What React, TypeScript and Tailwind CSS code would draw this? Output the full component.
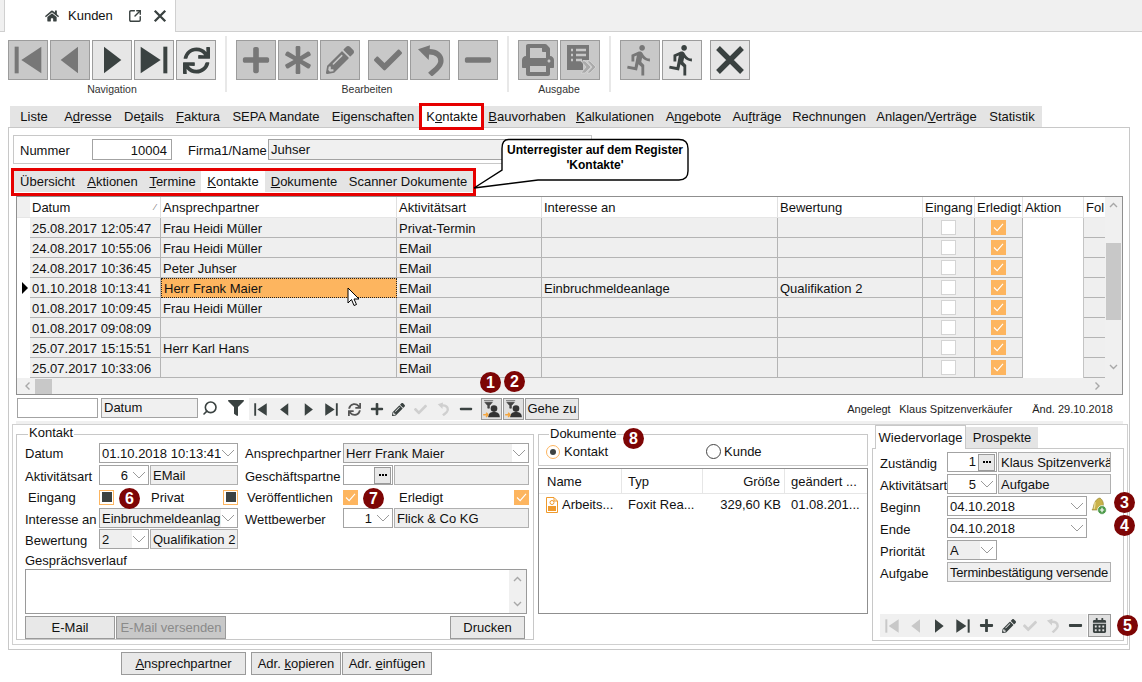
import type { ReactNode } from "react";
import { FaAsterisk, FaCalendarAlt, FaCheck, FaFilter, FaHome, FaMinus, FaPencilAlt, FaPlus, FaPrint, FaSync } from "react-icons/fa";
import { MdDirectionsRun } from "react-icons/md";
import { Search, SquareArrowOutUpRight } from "lucide-react";

const columns = "grid grid-cols-[13px_131px_236px_145px_236px_145px_52px_48px_61px_21px]";
const cell = "bg-[#efefef] border-r border-b border-[#b4b4b4] pl-[2px] pt-[3px] leading-[15px] whitespace-nowrap";

const rows = [
  ["25.08.2017 12:05:47", "Frau Heidi Müller", "Privat-Termin", "", ""],
  ["24.08.2017 10:55:06", "Frau Heidi Müller", "EMail", "", ""],
  ["24.08.2017 10:36:45", "Peter Juhser", "EMail", "", ""],
  ["01.10.2018 10:13:41", "Herr Frank Maier", "EMail", "Einbruchmeldeanlage", "Qualifikation 2"],
  ["01.08.2017 10:09:45", "Frau Heidi Müller", "EMail", "", ""],
  ["01.08.2017 09:08:09", "", "EMail", "", ""],
  ["25.07.2017 15:15:51", "Herr Karl Hans", "EMail", "", ""],
  ["25.07.2017 10:33:06", "", "EMail", "", ""],
];

function First({ className = "" }: { className?: string }) {
  return (
    <svg viewBox="0 0 24 24" className={className} fill="currentColor">
      <rect x="2" y="2" width="3" height="20" />
      <polygon points="22,2 22,22 7,12" />
    </svg>
  );
}

function Prev({ className = "" }: { className?: string }) {
  return (
    <svg viewBox="0 0 24 24" className={className} fill="currentColor">
      <polygon points="18,2 18,22 5,12" />
    </svg>
  );
}

function Next({ className = "" }: { className?: string }) {
  return (
    <svg viewBox="0 0 24 24" className={className} fill="currentColor">
      <polygon points="6,2 6,22 19,12" />
    </svg>
  );
}

function Last({ className = "" }: { className?: string }) {
  return (
    <svg viewBox="0 0 24 24" className={className} fill="currentColor">
      <polygon points="2,2 2,22 17,12" />
      <rect x="19" y="2" width="3" height="20" />
    </svg>
  );
}

function Undo({ className = "" }: { className?: string }) {
  return (
    <svg viewBox="0 0 24 24" className={className} fill="none" stroke="currentColor" strokeWidth="4">
      <polygon points="3,4 12,1 11,12" fill="currentColor" stroke="none" />
      <path d="M9 6 C17 5 21 9 20 14 C19 18 15 20 12 23" />
    </svg>
  );
}

function Close({ className = "" }: { className?: string }) {
  return (
    <svg viewBox="0 0 24 24" className={className} fill="none" stroke="currentColor" strokeWidth="4">
      <path d="M3 3 L21 21 M21 3 L3 21" />
    </svg>
  );
}

function ListArrow({ className = "" }: { className?: string }) {
  return (
    <svg viewBox="0 0 32 32" className={className}>
      <path d="M3 1 H25 V16 H19 V26 H3 Z" fill="#777" />
      <path d="M7 6 H9 M12 6 H22 M7 11 H9 M12 11 H22 M7 16 H9 M12 16 H18" stroke="#c8c8c8" strokeWidth="2.4" />
      <path d="M17 17 H21 L27 23 L21 29 H17 L22 23 Z M23 17 H26 L32 23 L26 29 H23 L28 23 Z" fill="#aaa" stroke="#ddd" strokeWidth="0.6" />
    </svg>
  );
}

function ContactFilter({ className = "" }: { className?: string }) {
  return (
    <svg viewBox="0 0 22 24" className={className}>
      <path d="M2 2 H13 M3 4 H12 L8.5 8 V11 H6.5 V8 Z" fill="#444" stroke="#444" strokeWidth="0.8" />
      <circle cx="14" cy="11.5" r="4" fill="#333" />
      <path d="M7 22 C7 17 10 15.5 14 15.5 C18 15.5 21 17 21 22 Z" fill="#333" />
      <path d="M1 19 H7 M7 19 L4.5 16.5 M7 19 L4.5 21.5" stroke="#f4a640" strokeWidth="1.8" fill="none" />
    </svg>
  );
}

function Chevron() {
  return (
    <svg viewBox="0 0 14 8" className="w-[14px] h-2 shrink-0" fill="none" stroke="#9a9a9a">
      <path d="M1 1 L7 7 L13 1" />
    </svg>
  );
}

function Arrow({ className = "" }: { className?: string }) {
  return (
    <svg viewBox="0 0 9 6" className={`w-[9px] h-[6px] ${className}`} fill="none" stroke="#a8a8a8" strokeWidth="1.4">
      <path d="M1 1 L4.5 4.5 L8 1" />
    </svg>
  );
}

function Tick() {
  return (
    <span className="w-[15px] h-[15px] bg-[#fdb55f] flex items-center justify-center shrink-0">
      <svg viewBox="0 0 12 10" className="w-[11px] h-[9px]" fill="none" stroke="white" strokeWidth="1.2">
        <path d="M1 5 L4.5 8.5 L11 1" />
      </svg>
    </span>
  );
}

function Square() {
  return (
    <span className="w-[15px] h-[15px] border border-[#fdb55f] flex items-center justify-center shrink-0">
      <span className="w-[10px] h-[10px] bg-[#3c4242]" />
    </span>
  );
}

function ToolBtn({ on, children }: { on?: boolean; children: ReactNode }) {
  return (
    <div
      className={
        on
          ? "w-10 h-10 border border-[#9c9c9c] bg-[#e6e6e6] text-[#3a4241] flex items-center justify-center"
          : "w-10 h-10 border border-[#9c9c9c] bg-[#c8c8c8] text-[#777777] flex items-center justify-center"
      }
    >
      {children}
    </div>
  );
}

function Divider() {
  return <div className="w-[2px] h-14 -mt-1 mx-[9px] bg-[#e8e8e8] shrink-0" />;
}

function ToolLabel({ children }: { children: ReactNode }) {
  return <div className="text-[10.5px] leading-[12px] mt-[3px] text-center text-[#333]">{children}</div>;
}

function Tab({ w, children, on }: { w: string; children: ReactNode; on?: boolean }) {
  return (
    <div className={`${w} h-full shrink-0 flex items-center justify-center whitespace-nowrap ${on ? "bg-white" : ""}`}>
      <span>{children}</span>
    </div>
  );
}

function Label({ w, children, low }: { w: string; children: ReactNode; low?: boolean }) {
  return <span className={`${w} ${low ? "pt-[4px]" : "pt-[2px]"} shrink-0 whitespace-nowrap`}>{children}</span>;
}

function Combo({ w, text, right, shade }: { w: string; text: string; right?: boolean; shade?: boolean }) {
  return (
    <div className={`${w} h-[20px] border border-[#a3a3a3] bg-white flex items-center shrink-0 overflow-hidden`}>
      <span
        className={
          (right ? "flex-1 text-right pr-1 " : "flex-1 pl-[2px] ") +
          (shade ? "bg-[#efefef] h-full " : "") +
          "leading-[19px] overflow-hidden whitespace-nowrap"
        }
      >
        {text}
      </span>
      <span className="w-[16px] flex justify-start shrink-0">
        <Chevron />
      </span>
    </div>
  );
}

function ReadOnly({ w, text }: { w: string; text: string }) {
  return (
    <div className={`${w} h-[20px] border border-[#b0b0b0] bg-[#efefef] pl-[2px] leading-[19px] shrink-0 overflow-hidden whitespace-nowrap`}>
      {text}
    </div>
  );
}

function Dots() {
  return (
    <span className="w-[17px] h-[17px] border border-[#9a9a9a] bg-[#e8e8e8] flex items-center justify-center gap-[1px] shrink-0">
      <span className="w-[2px] h-[2px] bg-black" />
      <span className="w-[2px] h-[2px] bg-black" />
      <span className="w-[2px] h-[2px] bg-black" />
    </span>
  );
}

function Button({ className, children }: { className: string; children: ReactNode }) {
  return (
    <div className={`${className} h-[23px] border border-[#9a9a9a] flex items-center justify-center whitespace-nowrap shrink-0`}>
      {children}
    </div>
  );
}

function Badge({ n, className }: { n: number; className: string }) {
  return (
    <div className={`absolute ${className} w-[21px] h-[21px] rounded-full bg-[#7d0505] text-white text-[16px] font-bold flex items-center justify-center`}>
      {n}
    </div>
  );
}

function Pdf() {
  return (
    <svg viewBox="0 0 12 16" className="w-3 h-4 shrink-0">
      <path d="M0.5 0.5 H8 L11.5 4 V15.5 H0.5 Z" fill="white" stroke="#ef9a2d" />
      <path d="M8 1 V4 H11" fill="none" stroke="#ef9a2d" />
      <rect x="2" y="9" width="8" height="5" fill="#ef9a2d" />
      <circle cx="6" cy="5.5" r="2" fill="none" stroke="#ef9a2d" />
    </svg>
  );
}

function BellPlus() {
  return (
    <svg viewBox="0 0 18 18" className="ml-[2px] w-[18px] h-[18px] shrink-0">
      <path d="M11 1 C14 3 15 7 14 9 L15 13 L3 13 C5 11 4 8 6 5 C7 3 9 1 11 1 Z" fill="#c9b24a" stroke="#8f7d2a" strokeWidth="0.6" />
      <path d="M6 5 C6 8 6 10 5 12" stroke="#ece0a0" strokeWidth="1.2" fill="none" />
      <circle cx="13" cy="13" r="4.4" fill="#4d9a4a" stroke="white" strokeWidth="0.8" />
      <path d="M13 10.8 V15.2 M10.8 13 H15.2" stroke="white" strokeWidth="1.2" />
    </svg>
  );
}

export default function App() {
  return (
    <div className="relative w-[1142px] h-[682px] overflow-hidden bg-white text-[13px] leading-[16px] text-[#111] font-['Liberation_Sans',Arial,sans-serif]">
      {/* window tab strip */}
      <div className="h-8 bg-[#f0f0f0] border-b border-[#cfcfcf] pl-1">
        <div className="w-[172px] h-8 bg-white border-x border-[#d0d0d0] flex items-center pl-[40px]">
          <FaHome className="w-[14px] h-[14px] text-[#3a4241]" />
          <span className="ml-[9px] w-[52px]">Kunden</span>
          <SquareArrowOutUpRight className="ml-[8px] w-[14px] h-[14px] text-[#3a4241]" strokeWidth={2.4} />
          <Close className="ml-[11px] w-[14px] h-[14px] text-[#3a4241]" />
        </div>
      </div>

      {/* toolbar */}
      <div className="h-[74px] flex items-start pl-2 pt-2">
        <div className="shrink-0">
          <div className="flex gap-[2px]">
            <ToolBtn><First className="w-8 h-8" /></ToolBtn>
            <ToolBtn><Prev className="w-8 h-8" /></ToolBtn>
            <ToolBtn on><Next className="w-8 h-8" /></ToolBtn>
            <ToolBtn on><Last className="w-8 h-8" /></ToolBtn>
            <ToolBtn on><FaSync className="w-[27px] h-[27px]" /></ToolBtn>
          </div>
          <ToolLabel>Navigation</ToolLabel>
        </div>
        <Divider />
        <div className="shrink-0">
          <div className="flex">
            <div className="flex gap-[2px]">
              <ToolBtn><FaPlus className="w-[30px] h-[30px]" /></ToolBtn>
              <ToolBtn><FaAsterisk className="w-[28px] h-[28px]" /></ToolBtn>
              <ToolBtn><FaPencilAlt className="w-[28px] h-[28px]" /></ToolBtn>
            </div>
            <div className="flex gap-[2px] ml-2">
              <ToolBtn><FaCheck className="w-[28px] h-[28px]" /></ToolBtn>
              <ToolBtn><Undo className="w-8 h-8" /></ToolBtn>
            </div>
            <div className="ml-2">
              <ToolBtn><FaMinus className="w-[30px] h-[30px]" /></ToolBtn>
            </div>
          </div>
          <ToolLabel>Bearbeiten</ToolLabel>
        </div>
        <Divider />
        <div className="shrink-0">
          <div className="flex gap-[2px]">
            <ToolBtn><FaPrint className="w-[32px] h-[32px]" /></ToolBtn>
            <ToolBtn><ListArrow className="w-8 h-8" /></ToolBtn>
          </div>
          <ToolLabel>Ausgabe</ToolLabel>
        </div>
        <Divider />
        <div className="flex gap-[2px] shrink-0">
          <ToolBtn><MdDirectionsRun className="w-[34px] h-[34px]" /></ToolBtn>
          <ToolBtn on><MdDirectionsRun className="w-[34px] h-[34px]" /></ToolBtn>
        </div>
        <div className="ml-2">
          <ToolBtn on><Close className="w-8 h-8" /></ToolBtn>
        </div>
      </div>

      {/* main register tabs */}
      <div className="ml-[10px] w-[1032px] h-[21px] bg-[#e4e4e4] flex">
        <Tab w="w-[48px]">Liste</Tab>
        <Tab w="w-[60px]">A<u>d</u>resse</Tab>
        <Tab w="w-[52px]">De<u>t</u>ails</Tab>
        <Tab w="w-[56px]"><u>F</u>aktura</Tab>
        <Tab w="w-[100px]">SEPA Mandate</Tab>
        <Tab w="w-[94px]">Ei<u>g</u>enschaften</Tab>
        <Tab w="w-[64px]" on>K<u>o</u>ntakte</Tab>
        <Tab w="w-[86px]"><u>B</u>auvorhaben</Tab>
        <Tab w="w-[90px]"><u>K</u>alkulationen</Tab>
        <Tab w="w-[67px]">A<u>n</u>gebote</Tab>
        <Tab w="w-[60px]">Au<u>f</u>träge</Tab>
        <Tab w="w-[84px]">Rechnun<u>g</u>en</Tab>
        <Tab w="w-[111px]">Anlagen/<u>V</u>erträge</Tab>
        <Tab w="w-[60px]">Statistik</Tab>
      </div>

      {/* register frame */}
      <div className="ml-2 w-[1122px] h-[523px] border border-[#c8c8c8]">
        <div className="mt-[7px] ml-1 w-[579px] h-[29px] border border-[#c8c8c8] pl-[6px] flex items-center">
          <Label w="w-[72px]">Nummer</Label>
          <span className="w-20 h-[21px] border border-[#a3a3a3] text-right pr-1 leading-[21px]">10004</span>
          <Label w="ml-4 w-[80px]">Firma1/Name</Label>
          <span className="flex-1 h-[21px] border border-[#a3a3a3] bg-[#f0f0f0] pl-[2px] leading-[19px]">Juhser</span>
        </div>

        <div className="mt-[7px] ml-1 w-[460px] h-[21px] bg-[#e4e4e4] flex pl-[1px]">
          <Tab w="w-[67px]">Übersicht</Tab>
          <Tab w="w-[63px]"><u>A</u>ktionen</Tab>
          <Tab w="w-[57px]"><u>T</u>ermine</Tab>
          <Tab w="w-[64px]" on><u>K</u>ontakte</Tab>
          <Tab w="w-[78px]"><u>D</u>okumente</Tab>
          <Tab w="w-[130px]">Scanner Dokumente</Tab>
        </div>

        {/* grid */}
        <div className="mt-1 ml-[7px] w-[1107px] h-[199px] border border-[#8f8f8f] flex">
          <div className="w-[1088px] shrink-0">
            <div className={`${columns} h-[21px] border-b border-[#e6e6e6]`}>
              <div className="bg-[#f0f0f0]" />
              <div className="relative pl-[2px] pt-[3px] border-r border-[#e0e0e0]">
                Datum
                <span className="absolute right-[4px] top-[2px] text-[9px] text-[#777]">⁄</span>
              </div>
              <div className="pl-[2px] pt-[3px] border-r border-[#e0e0e0]">Ansprechpartner</div>
              <div className="pl-[2px] pt-[3px] border-r border-[#e0e0e0]">Aktivitätsart</div>
              <div className="pl-[2px] pt-[3px] border-r border-[#e0e0e0]">Interesse an</div>
              <div className="pl-[2px] pt-[3px] border-r border-[#e0e0e0]">Bewertung</div>
              <div className="pl-[2px] pt-[3px] border-r border-[#e0e0e0] whitespace-nowrap">Eingang</div>
              <div className="pl-[2px] pt-[3px] border-r border-[#e0e0e0] whitespace-nowrap">Erledigt</div>
              <div className="pl-[2px] pt-[3px] border-r border-[#e0e0e0]">Aktion</div>
              <div className="pl-[2px] pt-[3px] whitespace-nowrap">Fol</div>
            </div>
            {rows.map((r, i) => (
              <div key={r[0]} className={`${columns} h-5`}>
                <div className="bg-white flex items-center justify-end">
                  {i === 3 && (
                    <svg viewBox="0 0 6 12" className="w-[6px] h-3 mr-[2px]">
                      <polygon points="0,0 6,6 0,12" fill="#000" />
                    </svg>
                  )}
                </div>
                <div className={cell}>{r[0]}</div>
                {i === 3 ? (
                  <div className="bg-[#fdb55f] border border-dotted border-[#222] pl-[2px] pt-[2px] leading-[15px]">{r[1]}</div>
                ) : (
                  <div className={cell}>{r[1]}</div>
                )}
                <div className={cell}>{r[2]}</div>
                <div className={cell}>{r[3]}</div>
                <div className={cell}>{r[4]}</div>
                <div className="bg-[#efefef] border-r border-b border-[#b4b4b4] flex items-center justify-center">
                  <span className="w-[15px] h-[15px] bg-white border border-[#d4d4d4]" />
                </div>
                <div className="bg-[#efefef] border-r border-b border-[#b4b4b4] flex items-center justify-center">
                  <Tick />
                </div>
                <div className="bg-white border-r border-[#c4c4c4]" />
                <div className="bg-[#efefef] border-b border-[#b4b4b4]" />
              </div>
            ))}
            <div className="h-4 bg-[#f0f0f0] flex items-center">
              <Arrow className="ml-[6px] rotate-90" />
              <span className="ml-[3px] w-[17px] h-[15px] bg-[#c8c8c8]" />
              <Arrow className="ml-auto mr-[3px] -rotate-90" />
            </div>
          </div>
          <div className="flex-1 bg-[#f0f0f0] flex flex-col items-center">
            <Arrow className="mt-[5px] rotate-180" />
            <div className="mt-[35px] w-[15px] h-[77px] bg-[#c8c8c8]" />
            <Arrow className="mt-[44px]" />
          </div>
        </div>

        {/* navigator row */}
        <div className="mt-[3px] ml-2 h-[22px] flex items-start">
          <span className="w-[81px] h-5 border border-[#a3a3a3]" />
          <span className="ml-[3px] w-[97px] h-5 border border-[#a3a3a3] bg-[#f0f0f0] pl-[2px] leading-[18px]">Datum</span>
          <div className="w-[24px] h-5 flex items-center justify-center">
            <Search className="w-[16px] h-[16px] text-[#3a4241] -scale-x-100" strokeWidth={2.4} />
          </div>
          <div className="w-[27px] h-5 flex items-center justify-center">
            <FaFilter className="w-[16px] h-[16px] text-[#3a4241]" />
          </div>
          <div className="w-[232px] h-[22px] bg-[#f0f0f0] text-[#3a4241] flex items-center justify-around pr-1">
            <First className="w-[15px] h-[15px]" />
            <Prev className="w-[15px] h-[15px]" />
            <Next className="w-[15px] h-[15px]" />
            <Last className="w-[15px] h-[15px]" />
            <FaSync className="w-[13px] h-[13px] text-[#555]" />
            <FaPlus className="w-[14px] h-[14px]" />
            <FaPencilAlt className="w-[13px] h-[13px]" />
            <FaCheck className="w-[13px] h-[13px] text-[#cfcfcf]" />
            <Undo className="w-[14px] h-[14px] text-[#cfcfcf]" />
            <FaMinus className="w-[14px] h-[14px]" />
          </div>
          <div className="w-[21px] h-[22px] border border-[#9a9a9a] bg-[#e0e0e0] flex items-center justify-center">
            <ContactFilter className="w-[19px] h-[20px]" />
          </div>
          <div className="ml-[1px] w-[21px] h-[22px] border border-[#9a9a9a] bg-[#e0e0e0] flex items-center justify-center">
            <ContactFilter className="w-[19px] h-[20px]" />
          </div>
          <div className="ml-[1px] w-[54px] h-[22px] border border-[#9a9a9a] bg-[#e8e8e8] flex items-center justify-center">Gehe zu</div>
          <div className="ml-auto mr-4 h-[22px] flex items-center text-[11px] text-[#222]">
            <span className="w-[52px]">Angelegt</span>
            <span className="w-[133px]">Klaus Spitzenverkäufer</span>
            <span>Änd. 29.10.2018</span>
          </div>
        </div>
        <div className="mt-[1px] ml-[7px] w-[1107px] h-[3px] bg-[#f0f0f0]" />

        {/* lower section */}
        <div className="ml-[3px] w-[1116px] h-[221px] border border-[#d0d0d0] flex items-start">
          <fieldset className="mt-[2px] ml-[3px] w-[518px] h-[213px] border border-[#c8c8c8] pl-2 shrink-0">
            <legend className="ml-[3px] px-[1px] h-[15px] leading-[12px]">Kontakt</legend>
            <div className="mt-[1px] h-5 mb-[2px] flex items-center">
              <Label w="w-[74px]">Datum</Label>
              <Combo w="w-[139px]" text="01.10.2018 10:13:41" />
              <Label w="ml-[7px] w-[98px]">Ansprechpartner</Label>
              <Combo w="w-[186px]" text="Herr Frank Maier" shade />
            </div>
            <div className="h-5 mb-[2px] flex items-center">
              <Label w="w-[74px]" low>Aktivitätsart</Label>
              <Combo w="w-[50px]" text="6" right />
              <span className="ml-[1px]"><ReadOnly w="w-[88px]" text="EMail" /></span>
              <Label w="ml-[7px] w-[98px]" low>Geschäftspartne</Label>
              <div className="w-[50px] h-5 border border-[#a3a3a3] flex items-center justify-end pr-[1px] shrink-0">
                <Dots />
              </div>
              <span className="ml-[1px]"><ReadOnly w="w-[135px]" text="" /></span>
            </div>
            <div className="h-5 mb-[1px] flex items-center">
              <Label w="w-[74px] pl-[3px]">Eingang</Label>
              <Square />
              <Label w="ml-[37px] w-[72px]">Privat</Label>
              <Square />
              <Label w="ml-[9px] w-[96px]">Veröffentlichen</Label>
              <Tick />
              <Label w="ml-[41px] w-[115px]">Erledigt</Label>
              <Tick />
            </div>
            <div className="h-5 mb-[1px] flex items-center">
              <Label w="w-[74px]" low>Interesse an</Label>
              <Combo w="w-[139px]" text="Einbruchmeldeanlag" shade />
              <Label w="ml-[7px] w-[98px]" low>Wettbewerber</Label>
              <Combo w="w-[50px]" text="1" right />
              <span className="ml-[1px]"><ReadOnly w="w-[135px]" text="Flick & Co KG" /></span>
            </div>
            <div className="h-5 flex items-center">
              <Label w="w-[74px]" low>Bewertung</Label>
              <Combo w="w-[50px]" text="2" shade />
              <span className="ml-[1px]"><ReadOnly w="w-[88px]" text="Qualifikation 2" /></span>
            </div>
            <div className="mt-[4px] h-4 leading-[15px]">Gesprächsverlauf</div>
            <div className="w-[502px] h-[45px] border border-[#9a9a9a] flex justify-end">
              <div className="w-[17px] bg-[#f0f0f0] flex flex-col justify-between items-center py-[6px]">
                <Arrow className="rotate-180" />
                <Arrow />
              </div>
            </div>
            <div className="mt-[2px] w-[500px] flex">
              <Button className="w-[90px] bg-[#e8e8e8]">E-Mail</Button>
              <Button className="ml-[1px] w-[110px] bg-[#c8c8c8] text-[#8a8a8a]">E-Mail versenden</Button>
              <Button className="ml-auto w-[75px] bg-[#e8e8e8]">Drucken</Button>
            </div>
          </fieldset>

          <div className="mt-[2px] ml-1 w-[330px] shrink-0">
            <fieldset className="h-[39px] border border-[#c8c8c8]">
              <legend className="ml-[10px] px-[1px] h-[15px] leading-[13px]">Dokumente</legend>
              <div className="flex items-center h-[15px] mt-[2px] pl-[7px]">
                <span className="w-[14px] h-[14px] rounded-full border border-[#fdb55f] flex items-center justify-center">
                  <span className="w-[6px] h-[6px] rounded-full bg-[#3c4242]" />
                </span>
                <span className="ml-[4px] w-[142px]">Kontakt</span>
                <span className="w-[15px] h-[15px] rounded-full border border-[#444]" />
                <span className="ml-[3px]">Kunde</span>
              </div>
            </fieldset>
            <div className="mt-[2px] h-[146px] border border-[#8f8f8f]">
              <div className="flex h-[25px] items-center border-b border-[#e6e6e6]">
                <span className="w-[83px] h-full pl-2 leading-[26px] border-r border-[#e6e6e6]">Name</span>
                <span className="w-[81px] h-full pl-[6px] leading-[26px] border-r border-[#e6e6e6]">Typ</span>
                <span className="w-[82px] h-full pr-1 text-right leading-[26px] border-r border-[#e6e6e6]">Größe</span>
                <span className="pl-[6px] leading-[26px] h-full">geändert ...</span>
              </div>
              <div className="flex h-[22px] items-center">
                <span className="w-[83px] pl-[7px] flex items-center gap-[4px] whitespace-nowrap"><Pdf />Arbeits...</span>
                <span className="w-[81px] pl-[6px] whitespace-nowrap">Foxit Rea...</span>
                <span className="w-[82px] pr-1 text-right whitespace-nowrap">329,60 KB</span>
                <span className="pl-[6px] whitespace-nowrap">01.08.201...</span>
              </div>
            </div>
          </div>

          <div className="ml-1 w-[252px] shrink-0">
            <div className="flex items-end h-[23px] pl-[3px]">
              <div className="w-[91px] h-[24px] -mb-[1px] relative bg-white border-x border-t border-[#c8c8c8] flex items-center justify-center">Wiedervorlage</div>
              <div className="w-[72px] h-[21px] bg-[#e4e4e4] flex items-center justify-center">Prospekte</div>
            </div>
            <div className="h-[193px] border border-[#c8c8c8] pl-[7px] pt-[3px]">
              <div className="flex flex-col gap-[2px]">
                <div className="h-5 flex items-center">
                  <Label w="w-[67px]" low>Zuständig</Label>
                  <div className="w-[50px] h-5 border border-[#a3a3a3] flex items-center justify-end gap-[2px] pr-[1px] shrink-0">
                    <span>1</span>
                    <Dots />
                  </div>
                  <span className="ml-[1px]"><ReadOnly w="w-[113px]" text="Klaus Spitzenverkä" /></span>
                </div>
                <div className="h-5 flex items-center">
                  <Label w="w-[67px]" low>Aktivitätsart</Label>
                  <Combo w="w-[50px]" text="5" right />
                  <span className="ml-[1px]"><ReadOnly w="w-[113px]" text="Aufgabe" /></span>
                </div>
                <div className="h-5 flex items-center">
                  <Label w="w-[67px]" low>Beginn</Label>
                  <Combo w="w-[140px]" text="04.10.2018" />
                  <BellPlus />
                </div>
                <div className="h-5 flex items-center">
                  <Label w="w-[67px]" low>Ende</Label>
                  <Combo w="w-[140px]" text="04.10.2018" />
                </div>
                <div className="h-5 flex items-center">
                  <Label w="w-[67px]" low>Priorität</Label>
                  <Combo w="w-[50px]" text="A" shade />
                </div>
                <div className="h-5 flex items-center">
                  <Label w="w-[67px]" low>Aufgabe</Label>
                  <ReadOnly w="w-[164px] tracking-[-0.2px]" text="Terminbestätigung versende" />
                </div>
              </div>
              <div className="mt-[32px] flex items-start">
                <div className="w-[207px] h-[23px] bg-[#f0f0f0] text-[#3a4241] flex items-center justify-around">
                  <First className="w-[16px] h-[16px] text-[#c8c8c8]" />
                  <Prev className="w-[16px] h-[16px] text-[#c8c8c8]" />
                  <Next className="w-[16px] h-[16px]" />
                  <Last className="w-[16px] h-[16px]" />
                  <FaPlus className="w-[15px] h-[15px]" />
                  <FaPencilAlt className="w-[14px] h-[14px]" />
                  <FaCheck className="w-[14px] h-[14px] text-[#cfcfcf]" />
                  <Undo className="w-[15px] h-[15px] text-[#cfcfcf]" />
                  <FaMinus className="w-[15px] h-[15px]" />
                </div>
                <div className="ml-[1px] w-[23px] h-[23px] border border-[#9a9a9a] bg-[#e0e0e0] flex items-center justify-center">
                  <FaCalendarAlt className="w-[15px] h-[15px] text-[#3a4241]" />
                </div>
              </div>
            </div>
          </div>
        </div>
      </div>

      {/* bottom buttons */}
      <div className="mt-[2px] ml-[121px] flex">
        <Button className="w-[125px] bg-[#e8e8e8]"><span><u>A</u>nsprechpartner</span></Button>
        <Button className="ml-[5px] w-[90px] bg-[#e8e8e8]"><span>Adr. <u>k</u>opieren</span></Button>
        <Button className="ml-[1px] w-[90px] bg-[#e8e8e8]"><span>Adr. <u>e</u>infügen</span></Button>
      </div>

      {/* annotations over the screenshot */}
      <div className="absolute left-[419px] top-[103px] w-[65px] h-[27px] border-[3px] border-[#e60000]" />
      <div className="absolute left-[11px] top-[168px] w-[465px] h-[28px] border-[3px] border-[#e60000]" />
      <svg viewBox="0 0 225 60" className="absolute left-[470px] top-[135px] w-[225px] h-[60px]">
        <path
          d="M38.5 4.5 H209 Q218 4.5 218 13.5 V36 Q218 45 209 45 H68 L4 53 L32 35 V13.5 Q32 4.5 38.5 4.5 Z"
          fill="white"
          stroke="black"
          strokeWidth="1.4"
        />
      </svg>
      <div className="absolute left-[502px] top-[143px] w-[186px] text-center text-[12px] leading-[15px] font-bold text-black whitespace-nowrap">
        Unterregister auf dem Register
        <br />
        'Kontakte'
      </div>
      <svg viewBox="0 0 14 20" className="absolute left-[347px] top-[287px] w-[14px] h-5">
        <path d="M1 1 V16 L4.5 12.5 L7 18.5 L9.5 17.5 L7 12 H12 Z" fill="white" stroke="black" />
      </svg>
      <Badge n={1} className="left-[480px] top-[372px]" />
      <Badge n={2} className="left-[504px] top-[371px]" />
      <Badge n={3} className="left-[1114px] top-[492px]" />
      <Badge n={4} className="left-[1114px] top-[515px]" />
      <Badge n={5} className="left-[1117px] top-[615px]" />
      <Badge n={6} className="left-[119px] top-[488px]" />
      <Badge n={7} className="left-[363px] top-[488px]" />
      <Badge n={8} className="left-[623px] top-[428px]" />
    </div>
  );
}
